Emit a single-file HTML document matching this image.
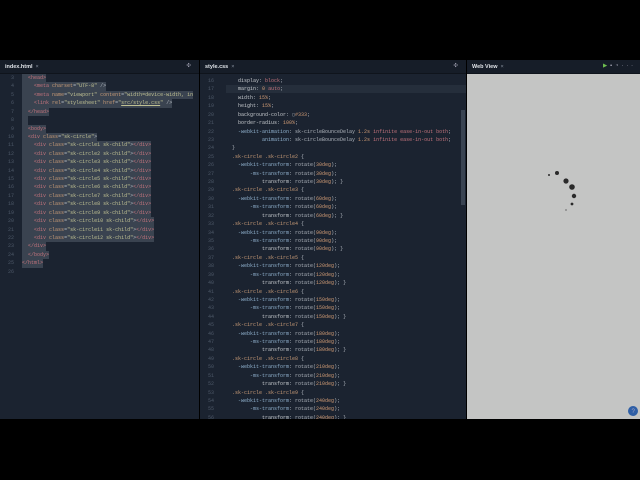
<!DOCTYPE html>
<html><head><meta charset="utf-8"><style>
*{margin:0;padding:0;box-sizing:border-box}
body{width:640px;height:480px;background:#000;position:relative;overflow:hidden;font-family:"Liberation Mono",monospace}
.p{position:absolute;top:60px;height:359px;background:#1b2330;overflow:hidden}
.hd{height:14px;background:#161d28;color:#dfe3e8;font:bold 5.5px "Liberation Sans",sans-serif;padding:4px 5px;position:relative;border-bottom:1px solid #0f141c}
.hd i{font-style:normal;color:#8a93a0;font-weight:normal;margin-left:3px}
.hd b{position:absolute;right:8px;top:3px;color:#aab;font-weight:normal}
.ln{position:absolute;left:0;height:8.42px;line-height:8.42px;font-size:5px;white-space:pre;color:#aeb4bc;width:100%}
.n{position:absolute;color:#4d5868;text-align:right;width:14px}
.c{position:absolute}
.t{color:#c2737c}.a{color:#c79a76}.s{color:#bfc092}.v{color:#c2737c}.o{color:#cf9a74}.w{color:#8fb0cc}.k{color:#c4c8cc}
.sel{background:#3a4350;display:inline-block;min-width:6px}
</style></head><body>
<div class="p" style="left:0;width:199px">
<div class="hd">index.html<i>×</i><b>✣</b></div>
<div id="h"></div>
</div>
<div class="p" style="left:200px;width:266px">
<div class="hd">style.css<i>×</i><b>✣</b></div>
<div style="position:absolute;left:26px;top:25px;width:240px;height:8.4px;background:#252e3b"></div>
<div style="position:absolute;left:261px;top:50px;width:4px;height:95px;background:#3a4452"></div>
<div id="c"></div>
</div>
<div class="p" style="left:467px;width:173px;background:#c4c5c4">
<div class="hd" style="background:#161d28">Web View<i>×</i><b style="right:4px;letter-spacing:3px"><span style="color:#6fbf50">▶</span>▪◔···</b></div>
<svg width="173" height="345" style="position:absolute;left:0;top:14px">
<g fill="#2a2a2a"><circle cx="82" cy="101" r="1"/><circle cx="90" cy="99" r="2"/><circle cx="99" cy="107" r="2.6"/><circle cx="105" cy="113" r="2.8"/><circle cx="107" cy="122" r="2.2"/><circle cx="105" cy="130" r="1.4"/><circle cx="99" cy="136" r="0.6"/></g>
<circle cx="166" cy="337" r="5" fill="#2f5fa6"/><text x="164.5" y="339" font-size="6" fill="#aac">?</text>
</svg>
</div>
<script>
function L(par,top,num,numx,codex,html){var d=document.createElement('div');d.className='ln';d.style.top=top+'px';d.innerHTML='<span class="n" style="left:'+numx+'px">'+num+'</span><span class="c" style="left:'+codex+'px">'+html+'</span>';par.appendChild(d);}
var h=document.getElementById('h');
function sp(x){return '<span class="sel">'+x+'</span>';}
var q='<span class="s">',e='</span>';
var H=[
[3,'  <span class="t">&lt;head&gt;</span>'],
[4,'    <span class="t">&lt;meta</span> <span class="a">charset</span>='+q+'"UTF-8"'+e+' /&gt;'],
[5,'    <span class="t">&lt;meta</span> <span class="a">name</span>='+q+'"viewport"'+e+' <span class="a">content</span>='+q+'"width=device-width, in'+e],
[6,'    <span class="t">&lt;link</span> <span class="a">rel</span>='+q+'"stylesheet"'+e+' <span class="a">href</span>='+q+'"<u>src/style.css</u>"'+e+' /&gt;'],
[7,'  <span class="t">&lt;/head&gt;</span>'],[8,'  '],
[9,'  <span class="t">&lt;body&gt;</span>'],
[10,'  <span class="t">&lt;div</span> <span class="a">class</span>='+q+'"sk-circle"'+e+'&gt;']];
for(var i=1;i<=12;i++)H.push([10+i,'    <span class="t">&lt;div</span> <span class="a">class</span>='+q+'"sk-circle'+i+' sk-child"'+e+'&gt;<span class="t">&lt;/div&gt;</span>']);
H.push([23,'  <span class="t">&lt;/div&gt;</span>'],[24,'  <span class="t">&lt;/body&gt;</span>'],[25,'<span class="t">&lt;/html&gt;</span>']);
H.forEach(function(r,j){L(h,14+j*8.42,r[0],0,22,sp(r[1]));});
L(h,14+23*8.42,26,0,22,'');
var c=document.getElementById('c');
var C=[[16,'  <span class="k">display</span>: <span class="v">block</span>;'],[17,'  <span class="k">margin</span>: <span class="o">0</span> <span class="v">auto</span>;'],[18,'  <span class="k">width</span>: <span class="o">15%</span>;'],[19,'  <span class="k">height</span>: <span class="o">15%</span>;'],[20,'  <span class="k">background-color</span>: ▢<span class="o">#333</span>;'],[21,'  <span class="k">border-radius</span>: <span class="o">100%</span>;'],[22,'  <span class="w">-webkit-animation</span>: sk-circleBounceDelay <span class="o">1.2s</span> <span class="v">infinite ease-in-out both</span>;'],[23,'          <span class="w">animation</span>: sk-circleBounceDelay <span class="o">1.2s</span> <span class="v">infinite ease-in-out both</span>;'],[24,'}']];
var n=25,degs=[[2,30],[3,60],[4,90],[5,120],[6,150],[7,180],[8,210],[9,240]];
degs.forEach(function(d){C.push([n++,'<span class="a">.sk-circle .sk-circle'+d[0]+'</span> {']);C.push([n++,'  <span class="w">-webkit-transform</span>: rotate(<span class="o">'+d[1]+'deg</span>);']);C.push([n++,'      <span class="w">-ms-transform</span>: rotate(<span class="o">'+d[1]+'deg</span>);']);C.push([n++,'          <span class="k">transform</span>: rotate(<span class="o">'+d[1]+'deg</span>); }']);});
C.forEach(function(r,j){if(j<42)L(c,17+j*8.42,r[0],0,32,r[1]);});
</script>
</body></html>
